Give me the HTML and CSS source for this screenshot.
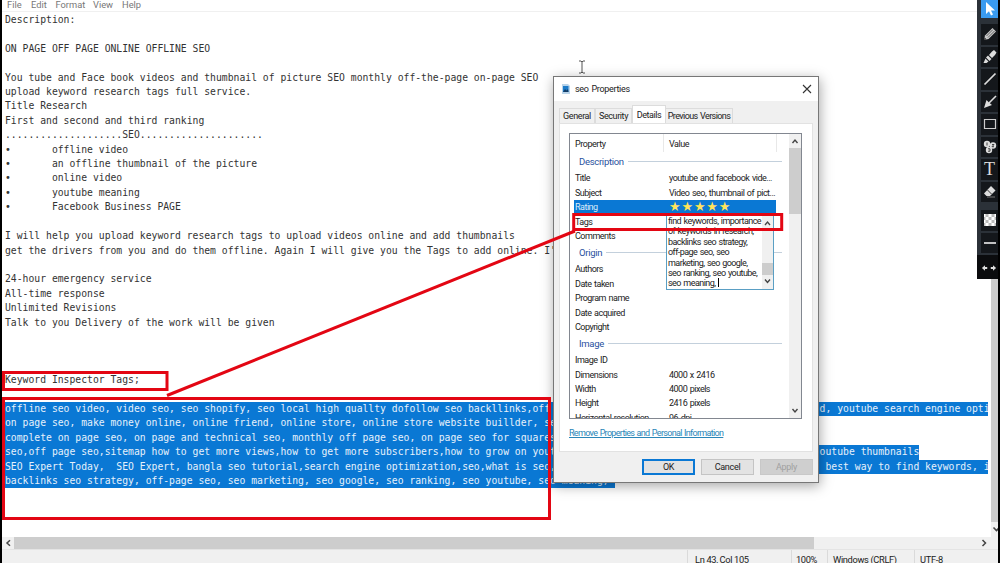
FILE: index.html
```
<!DOCTYPE html>
<html lang="en">
<head>
    <meta charset="UTF-8">
    <meta name="viewport" content="width=device-width, initial-scale=1.0">
    <title>Notepad</title>
    <link rel="stylesheet" href="styles.css">
</head>
<body>
    <div class="notepad">
        <div class="menu">
            <span class="m-file">File</span><span class="m-edit">Edit</span><span class="m-format">Format</span><span class="m-view">View</span><span>Help</span>
        </div>
        <div class="main">
            <div class="editor">
<pre>Description:

ON PAGE OFF PAGE ONLINE OFFLINE SEO

You tube and Face book videos and thumbnail of picture SEO monthly off-the-page on-page SEO
upload keyword research tags full service.
Title Research
First and second and third ranking
....................SEO.....................
•       offline video
•       an offline thumbnail of the picture
•       online video
•       youtube meaning
•       Facebook Business PAGE

I will help you upload keyword research tags to upload videos online and add thumbnails
get the drivers from you and do them offline. Again I will give you the Tags to add online. I'

24-hour emergency service
All-time response
Unlimited Revisions
Talk to you Delivery of the work will be given



Keyword Inspector Tags;
</pre>
<div class="selected">
<div class="sel"><span class="head">offline seo video, video seo, seo shopify, seo local high quallty dofollow seo backllinks,off</span>d, youtube search engine opti</div>
<div class="sel">on page seo, make money online, online friend, online store, online store website buillder, seo</div>
<div class="sel">complete on page seo, on page and technical seo, monthly off page seo, on page seo for squares</div>
<div class="sel"><span class="head">seo,off page seo,sitemap how to get more views,how to get more subscribers,how to grow on yout</span>outube thumbnails</div>
<div class="sel"><span class="head">SEO Expert Today,  SEO Expert, bangla seo tutorial,search engine optimization,seo,what is seo,</span> best way to find keywords, i</div>
<div class="sel">backlinks seo strategy, off-page seo, seo marketing, seo google, seo ranking, seo youtube, seo meaning, </div>
</div>
            </div>
            <div class="vscroll">
                <div class="vthumb"></div>
                <svg width="7" height="14" viewBox="0 0 7 14"><path d="M2.500 5.500l3 3 3-3" fill="none" stroke="#444" stroke-width="1.600"/></svg>
            </div>
        </div>
        <div class="hscroll">
            <svg width="12" height="12" viewBox="0 0 12 12"><path d="M8 3.200L5 6l3 2.800" fill="none" stroke="#444" stroke-width="1.500"/></svg>
            <div class="hthumb"></div>
            <svg class="right" width="14" height="12" viewBox="0 0 14 12"><path d="M5.500 3l3 3-3 3" fill="none" stroke="#444" stroke-width="1.500"/></svg>
        </div>
        <div class="status">
            <span class="s-pos">Ln 43, Col 105</span><span class="s-zoom">100%</span><span class="s-eol">Windows (CRLF)</span><span class="s-enc">UTF-8</span>
        </div>
    </div>

    <svg class="ibeam" width="8" height="14" viewBox="0 0 8 14"><path d="M1 1h2l1 1 1-1h2M4 2v10M1 13h2l1-1 1 1h2" fill="none" stroke="#555"/></svg>

    <div class="dialog">
        <div class="titlebar">
            <svg width="8" height="10" viewBox="0 0 8 10"><path d="M0 0h6l2 2v8H0z" fill="#b9d4ea"/><path d="M1 2h5.500v6H1z" fill="#1c7bc8"/><path d="M1 8l2-3 1.500 1.500L6 5l.5 3z" fill="#123c66"/></svg>
            <span>seo Properties</span>
            <svg class="close" width="10" height="10" viewBox="0 0 10 10"><path d="M1 1l8 8M9 1L1 9" stroke="#333" stroke-width="1.100"/></svg>
        </div>
        <div class="tabs">
            <div class="tab t1"><span>General</span></div>
            <div class="tab t2"><span>Security</span></div>
            <div class="tab t3 active"><span>Details</span></div>
            <div class="tab t4"><span>Previous Versions</span></div>
        </div>
        <div class="panel">
            <div class="list">
                <div class="rows">
                    <div class="header"><span>Property</span><span>Value</span></div>
                    <div class="group">Description</div>
                    <div class="row"><span>Title</span><span>youtube and facebook vide...</span></div>
                    <div class="row"><span>Subject</span><span>Video seo, thumbnail of pict...</span></div>
                    <div class="row rating"><span>Rating</span><span class="stars">★★★★★</span></div>
                    <div class="row"><span>Tags</span></div>
                    <div class="row"><span>Comments</span></div>
                    <div class="group">Origin</div>
                    <div class="row"><span>Authors</span></div>
                    <div class="row"><span>Date taken</span></div>
                    <div class="row"><span>Program name</span></div>
                    <div class="row"><span>Date acquired</span></div>
                    <div class="row"><span>Copyright</span></div>
                    <div class="group">Image</div>
                    <div class="row"><span>Image ID</span></div>
                    <div class="row"><span>Dimensions</span><span>4000 x 2416</span></div>
                    <div class="row"><span>Width</span><span>4000 pixels</span></div>
                    <div class="row"><span>Height</span><span>2416 pixels</span></div>
                    <div class="row"><span>Horizontal resolution</span><span>96 dpi</span></div>
                </div>
                <div class="listscroll">
                    <svg width="12" height="14" viewBox="0 0 12 14"><path d="M3.500 9L6 6l2.500 3" fill="none" stroke="#444" stroke-width="1.400"/></svg>
                    <div class="listthumb"></div>
                    <svg class="down" width="12" height="14" viewBox="0 0 12 14"><path d="M3.500 5L6 8l2.500-3" fill="none" stroke="#444" stroke-width="1.400"/></svg>
                </div>
            </div>
            <a class="remove">Remove Properties and Personal Information</a>
        </div>
        <div class="buttons">
            <div class="btn ok"><span>OK</span></div>
            <div class="btn"><span>Cancel</span></div>
            <div class="btn disabled"><span>Apply</span></div>
        </div>

        <!-- tag edit box over the list -->
        <div class="tagbox">
            <div class="tagtext">find keywords, importance<br>of keywords in research,<br>backlinks seo strategy,<br>off-page seo, seo<br>marketing, seo google,<br>seo ranking, seo youtube,<br>seo meaning, <i class="caret"></i></div>
            <div class="tagscroll">
                <svg width="11" height="14" viewBox="0 0 11 14"><path d="M3 9l2.500-3L8 9" fill="none" stroke="#444" stroke-width="1.300"/></svg>
                <div class="tagthumb"></div>
                <svg width="11" height="14" viewBox="0 0 11 14"><path d="M3 4.500l2.500 3 2.500-3" fill="none" stroke="#444" stroke-width="1.400"/></svg>
            </div>
        </div>
    </div>

    <!-- red marks -->
    <svg class="marks" width="1000" height="563" viewBox="0 0 1000 563" fill="none" stroke="#e30613" stroke-width="3">
        <rect x="3.500" y="372.500" width="163.500" height="17"/>
        <rect x="3.500" y="398.500" width="546" height="120"/>
        <rect x="573.700" y="214.500" width="208" height="15"/>
        <path d="M167 395.500L575 231"/>
    </svg>

    <div class="tools">
        <div class="tool on"><svg width="16" height="16" viewBox="0 0 16 16"><path d="M4 1v12l3-2.800 2 4.300 2-1-2-4.100h4z" fill="#fff"/></svg></div>
        <div class="tool first"><svg width="16" height="16" viewBox="0 0 16 16"><path d="M2 14l1-4.500L10.500 2 14 5.500 6.500 13z" fill="#c9c9c9"/><path d="M4.500 10L11 3.500M6 11.500L12.500 5" stroke="#444" stroke-width=".8"/><path d="M2 14l.7-2.500 1.800 1.800z" fill="#222"/></svg></div>
        <div class="tool"><svg width="16" height="16" viewBox="0 0 16 16"><path d="M10 2.500L12 1l2.500 2.500L13 6l-3 3-3-3zM6 6.500L9.500 10l-2 2L4 8.500zM3.500 9.500l3 3L4.500 14H1.500z" fill="#ddd"/></svg></div>
        <div class="tool"><svg width="16" height="16" viewBox="0 0 16 16"><path d="M2.500 13.500l11-11" stroke="#ddd" stroke-width="1.700"/></svg></div>
        <div class="tool"><svg width="16" height="16" viewBox="0 0 16 16"><path d="M7 9l7-7" stroke="#ddd" stroke-width="1.600"/><path d="M2 14l2.500-8L7 8.500 10 11z" fill="#ddd"/></svg></div>
        <div class="tool"><svg width="16" height="16" viewBox="0 0 16 16"><path d="M2.500 3.500h11v9h-11z" fill="none" stroke="#ccc" stroke-width="1.200"/></svg></div>
        <div class="tool"><svg width="16" height="16" viewBox="0 0 16 16"><g fill="#ddd"><circle cx="5" cy="5" r="3.200"/><circle cx="11" cy="6.500" r="3.200"/><circle cx="7" cy="11" r="3.200"/></g><path d="M5 3.500v3M10 5.500h2l-2 2.200h2M6 9.800h2v2.400H6" fill="none" stroke="#333" stroke-width=".9"/></svg></div>
        <div class="tool"><span class="letter">T</span></div>
        <div class="tool"><svg width="16" height="16" viewBox="0 0 16 16"><path d="M9 2L13.500 6.500 8 12H4.500L2 9.500z" fill="#ddd"/><path d="M5.500 6L9.500 10" stroke="#333"/><path d="M5 13h8" stroke="#777"/></svg></div>
        <div class="tool second"><svg width="12" height="12" viewBox="0 0 12 12"><path d="M0 0h12v12H0z" fill="#fff"/><path d="M1.500 0h3v3h-3zM7.500 0h3v3h-3zM4.500 3h3v3h-3zM10.500 3H12v3h-1.500zM0 3h1.500v3H0zM1.500 6h3v3h-3zM7.500 6h3v3h-3zM4.500 9h3v3h-3zM0 9h1.500v3H0zM10.500 9H12v3h-1.500z" fill="#bbb"/></svg></div>
        <div class="tool"><svg width="16" height="16" viewBox="0 0 16 16"><path d="M2 8h12" stroke="#eee" stroke-width="1.600"/></svg></div>
        <div class="tool last"><svg width="16" height="12" viewBox="0 0 18 12"><path d="M1 6l3.500-3v2H7v2H4.500v2zM17 6l-3.500-3v2H11v2h2.500v2z" fill="#ddd"/></svg></div>
    </div>
    <div class="edge"></div>
</body>
</html>
```
FILE: styles.css
```
* {
    box-sizing: border-box;
}
body {
    margin: 0;
    width: 1000px;
    height: 563px;
    overflow: hidden;
    position: relative;
    background: #fff;
    font-family: Roboto, "Open Sans", sans-serif;
    font-size: 9.300px;
    color: #222;
}
svg {
    display: block;
    flex: none;
}
.notepad {
    height: 563px;
    display: flex;
    flex-direction: column;
    border-left: 2px solid #000;
    border-right: 2px solid #000;
}
.menu {
    height: 12px;
    border-bottom: 1px solid #f0f0f0;
    padding-left: 5px;
    display: flex;
    line-height: 9px;
    color: #777;
    flex: none;
}
.m-file { width: 24px; }
.m-edit { width: 24.500px; }
.m-format { width: 37.500px; }
.m-view { width: 29px; }
.main {
    flex: 1;
    display: flex;
    min-height: 0;
}
.editor {
    width: 986px;
    overflow: hidden;
    padding: 1px 0 0 3px;
    font-family: "DejaVu Sans Mono", monospace;
    font-size: 9.740px;
    line-height: 14.400px;
    color: #333;
}
pre {
    margin: 0;
    font: inherit;
}
.selected {
    display: flex;
    flex-direction: column;
    align-items: flex-start;
    padding-top: 14.400px;
}
.sel {
    background: #0a78d4;
    color: #e6f1fb;
    white-space: pre;
    height: 14.400px;
}
.head {
    display: inline-block;
    width: 139ch;
}
.vscroll {
    width: 7px;
    margin-left: auto;
    background: #f0f0f0;
    display: flex;
    flex-direction: column;
}
.vthumb {
    height: 510px;
    background: #cdcdcd;
}
.hscroll {
    height: 12.500px;
    background: #f0f0f0;
    display: flex;
    align-items: center;
    flex: none;
}
.hthumb {
    width: 800px;
    height: 12.500px;
    background: #cdcdcd;
}
.right {
    margin-left: auto;
    margin-right: 7px;
}
.status {
    height: 14px;
    flex: none;
    background: #f0f0f0;
    border-top: 1px solid #e4e4e4;
    display: flex;
    justify-content: flex-end;
    line-height: 20px;
    letter-spacing: -0.350px;
}
.status span {
    border-left: 1px solid #dadada;
    padding-left: 7px;
    white-space: nowrap;
}
.s-pos { width: 104px; }
.s-zoom { width: 36px; }
.status .s-zoom { padding-left: 4px; }
.s-eol { width: 87px; }
.status .s-eol { padding-left: 5px; }
.s-enc { width: 84px; }
.status .s-enc { padding-left: 5px; }

.ibeam {
    position: absolute;
    left: 578px;
    top: 60px;
}

.dialog {
    position: absolute;
    left: 553px;
    top: 76px;
    width: 266px;
    height: 407px;
    border: 1px solid #777;
    background: #f0f0f0;
    box-shadow: 1px 3px 12px rgba(0, 0, 0, 0.35);
    padding: 0 5px;
    color: #222;
    font-size: 9px;
    letter-spacing: -0.600px;
    word-spacing: 0.800px;
}
.titlebar {
    height: 24px;
    margin: 0 -5px;
    padding: 0 6px 0 8px;
    background: #fff;
    display: flex;
    align-items: center;
    gap: 5px;
    letter-spacing: -0.300px;
}
.close {
    margin-left: auto;
}
.tabs {
    height: 22px;
    padding-top: 6px;
    display: flex;
    align-items: flex-end;
}
.tab {
    height: 15px;
    border: 1px solid #dcdcdc;
    border-bottom: none;
    display: flex;
    align-items: center;
    justify-content: center;
    white-space: nowrap;
}
.t1 { width: 36px; letter-spacing: -0.400px; }
.t2 { width: 37px; letter-spacing: -0.400px; }
.t3 { width: 34px; letter-spacing: -0.400px; }
.t4 { width: 67px; border-left: none; }
.tab.active {
    height: 18px;
    background: #fff;
}
.panel {
    height: 329px;
    background: #fff;
    border: 1px solid #e2e2e2;
    padding: 9px 10px 0 9px;
}
.list {
    height: 286px;
    border: 1px solid #828790;
    display: flex;
    overflow: hidden;
}
.rows {
    width: 219px;
    padding-left: 5px;
}
.header {
    height: 18.400px;
    line-height: 20px;
    display: flex;
    width: 202px;
    border-right: 1px solid #e8e8e8;
    letter-spacing: -0.450px;
}
.header span:first-child {
    width: 89px;
    border-right: 1px solid #e8e8e8;
}
.header span:last-child {
    padding-left: 5px;
}
.group {
    height: 19px;
    line-height: 18px;
    padding-left: 4px;
    display: flex;
    align-items: center;
    gap: 4px;
    color: #2a52a0;
    font-size: 9.500px;
    letter-spacing: -0.300px;
}
.group::after {
    content: "";
    height: 1px;
    flex: 1;
    margin-right: 7px;
    background: #c3d0dc;
}
.row {
    height: 14.400px;
    line-height: 14.400px;
    display: flex;
    width: 201px;
    white-space: nowrap;
    letter-spacing: -0.500px;
}
.row span:first-child {
    width: 94px;
    flex: none;
}
.rating {
    background: #0a78d4;
    color: #dcecfa;
    margin-left: -1px;
    padding-left: 1px;
    width: 202px;
}
.stars {
    font-family: "DejaVu Sans", sans-serif;
    font-size: 13px;
    letter-spacing: 0.800px;
    color: #ffe45c;
}
.listscroll {
    width: 12px;
    margin-left: auto;
    background: #f0f0f0;
    display: flex;
    flex-direction: column;
}
.listthumb {
    height: 66px;
    background: #cdcdcd;
}
.down {
    margin-top: auto;
}
.remove {
    display: inline-block;
    margin-top: 9px;
    color: #2a86b8;
    text-decoration: underline;
    white-space: nowrap;
    letter-spacing: -0.680px;
}
.buttons {
    display: flex;
    justify-content: flex-end;
    gap: 6px;
    margin-top: 7px;
    letter-spacing: -0.300px;
}
.btn {
    width: 53px;
    height: 16px;
    border: 1px solid #c4c4c4;
    background: #e3e3e3;
    display: flex;
    align-items: center;
    justify-content: center;
}
.btn.ok {
    border: 2px solid #0a78d4;
}
.btn.disabled {
    background: #cfcfcf;
    border-color: #c8c8c8;
    color: #a0a0a0;
}
.tagbox {
    position: absolute;
    left: 112px;
    top: 138px;
    width: 108px;
    height: 75px;
    border: 1px solid #5a9fc4;
    background: #fff;
    display: flex;
}
.tagtext {
    width: 95px;
    padding-left: 1px;
    line-height: 10.400px;
    white-space: nowrap;
    overflow: hidden;
    letter-spacing: -0.560px;
}
.caret {
    display: inline-block;
    width: 1px;
    height: 9px;
    background: #000;
    vertical-align: -1px;
}
.tagscroll {
    width: 11px;
    background: #f0f0f0;
    display: flex;
    flex-direction: column;
}
.tagthumb {
    height: 12px;
    margin-top: auto;
    background: #cdcdcd;
}
.marks {
    position: absolute;
    left: 0;
    top: 0;
}

.tools {
    position: absolute;
    left: 977px;
    top: 0;
    width: 23px;
    height: 279px;
    background: #2b3138;
    padding-left: 4px;
    display: flex;
    flex-direction: column;
    overflow: hidden;
}
.tool {
    width: 17px;
    height: 20.500px;
    margin-bottom: 2px;
    background: #14171b;
    display: flex;
    align-items: center;
    justify-content: center;
    flex: none;
}
.tool.on {
    height: 18px;
    background: #3a9bf0;
}
.tool.first {
    margin-top: 4px;
}
.tool.second {
    margin-top: 6px;
}
.tool.last {
    margin: 0 0 0 -4px;
    width: 23px;
    height: 25px;
    background: #0b0c0e;
    padding-left: 1px;
}
.letter {
    font-family: "Liberation Serif", serif;
    font-size: 18px;
    color: #ddd;
}
.edge {
    position: absolute;
    right: 0;
    top: 0;
    width: 2px;
    height: 563px;
    background: #000;
}
```
